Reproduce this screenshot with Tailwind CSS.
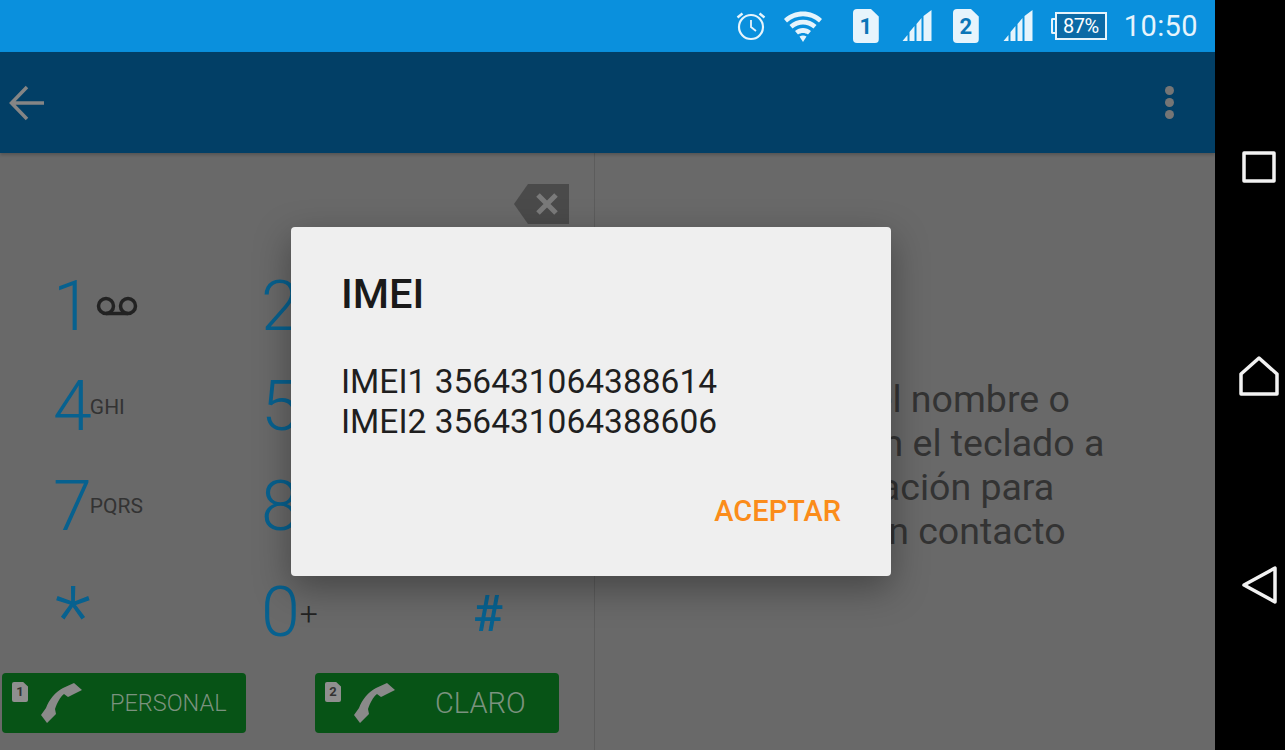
<!DOCTYPE html>
<html lang="en">
  <head>
    <meta charset="UTF-8" />
    <title>IMEI</title>
    <script src="https://cdn.jsdelivr.net/npm/@tailwindcss/browser@4"></script>
  </head>
  <body class="bg-black overflow-hidden font-[Roboto,sans-serif]">
    <div class="relative flex w-[1285px] h-[750px] overflow-hidden">
      <!-- screen -->
      <div class="w-[1215px] h-full flex flex-col bg-[#696969]">
        <!-- status bar -->
        <div class="h-[52px] bg-[#0a90dd] flex items-center justify-end text-[#e6f4fc]">
          <svg width="32" height="32" viewBox="0 0 32 32" fill="none" stroke="#e6f4fc" stroke-width="2.2">
            <circle cx="16" cy="17" r="12" />
            <path d="M16 10v7l5 4" stroke-width="1.8" />
            <path d="M2.5 7.5l5-4M29.5 7.5l-5-4" stroke-width="2.4" />
          </svg>
          <svg class="ml-[16px]" width="40" height="34" viewBox="0 0 38 34" fill="#e6f4fc">
            <path d="M0 10C10 0 28 0 38 10l-3 3.500C26 5 12 5 3 13.500z" />
            <path d="M5.500 16C13 9 25 9 32.500 16l-3 3.500C23 14 15 14 8.500 19.500z" />
            <path d="M11 22C15.500 18 22.500 18 27 22l-3 3.500C21 23.500 17 23.500 14 25.500z" />
            <path d="M15.500 27.500c2-1.500 5-1.500 7 0L19 33z" />
          </svg>
          <div class="ml-[30px] w-[26px] h-[34px] bg-[#e6f4fc] rounded-[4px] [clip-path:polygon(0_0,70%_0,100%_22%,100%_100%,0_100%)] flex items-center justify-center text-[#0b76b8] font-bold text-[22px]">1</div>
          <svg class="ml-[23px]" width="31" height="32" viewBox="0 0 30 32" fill="#e6f4fc">
            <path d="M0 31l5-6v6zM7 31v-9l5-6v15zM14 31V14l5-6v23zM21 31V6l8-6v31z" />
          </svg>
          <div class="ml-[20px] w-[26px] h-[34px] bg-[#e6f4fc] rounded-[4px] [clip-path:polygon(0_0,70%_0,100%_22%,100%_100%,0_100%)] flex items-center justify-center text-[#0b76b8] font-bold text-[22px]">2</div>
          <svg class="ml-[24px]" width="31" height="32" viewBox="0 0 30 32" fill="#e6f4fc">
            <path d="M0 31l5-6v6zM7 31v-9l5-6v15zM14 31V14l5-6v23zM21 31V6l8-6v31z" />
          </svg>
          <div class="ml-[17px] flex items-center">
            <span class="w-[4px] h-[16px] border-2 border-r-0 border-[#e6f4fc] rounded-l-[2px]"></span>
            <div class="w-[52px] h-[28px] border-2 border-[#e6f4fc] bg-[#0b6aa6] flex items-center justify-center text-[20px] tracking-tight text-white">87%</div>
          </div>
          <div class="ml-[17px] mr-[17px] text-[29px] leading-none tracking-[0.4px]">10:50</div>
        </div>
        <!-- action bar -->
        <div class="relative z-10 h-[101px] bg-[#023f66] shadow-[0_2px_3px_rgba(0,0,0,0.2)] flex items-center justify-between pl-[9px] pr-[41px]">
          <svg width="36" height="36" viewBox="0 0 36 36" fill="none" stroke="#858585" stroke-width="3.500">
            <path d="M35 18H3M18 2L2.500 18 18 34" />
          </svg>
          <div class="flex flex-col gap-[3px]">
            <span class="w-[9px] h-[9px] rounded-full bg-[#757575]"></span>
            <span class="w-[9px] h-[9px] rounded-full bg-[#757575]"></span>
            <span class="w-[9px] h-[9px] rounded-full bg-[#757575]"></span>
          </div>
        </div>
        <!-- content -->
        <div class="flex-1 flex">
          <div class="w-[595px] border-r border-[#5c5c5c] flex flex-col">
            <div class="h-[103px] flex justify-end items-start pt-[31px] pr-[25px]">
              <svg width="55" height="40" viewBox="0 0 55 40">
                <path d="M14 0H55V40H14L0 20z" fill="#4a4a4a" />
                <path d="M24 11l18 18M42 11L24 29" stroke="#7a7a7a" stroke-width="5" fill="none" />
              </svg>
            </div>
            <div class="grid grid-cols-[209px_212px_1fr] grid-rows-[100px_100px_100px_105px] text-[#07618f]">
              <div class="flex items-center pl-[53px]"><span class="text-[70px] font-light leading-none">1</span>
                <svg class="ml-[4px]" width="42" height="20" viewBox="0 0 42 20" fill="none" stroke="#222" stroke-width="3.500"><circle cx="10" cy="10" r="7.500" /><circle cx="32" cy="10" r="7.500" /><path d="M10 17.500h22" /></svg>
              </div>
              <div class="flex items-center pl-[52px]"><span class="text-[70px] font-light leading-none">2</span></div>
              <div></div>
              <div class="flex items-center pl-[53px]"><span class="text-[70px] font-light leading-none">4</span><span class="text-[21px] -ml-[2px] translate-y-[2px] text-[#333]">GHI</span></div>
              <div class="flex items-center pl-[52px]"><span class="text-[70px] font-light leading-none">5</span></div>
              <div></div>
              <div class="flex items-center pl-[53px]"><span class="text-[70px] font-light leading-none">7</span><span class="text-[21px] -ml-[2px] translate-y-[1px] text-[#333]">PQRS</span></div>
              <div class="flex items-center pl-[52px]"><span class="text-[70px] font-light leading-none">8</span></div>
              <div></div>
              <div class="flex items-center pl-[55px]"><span class="text-[84px] font-light leading-none h-[70px] translate-y-[1px]">*</span></div>
              <div class="flex items-center pl-[52px] translate-y-[3px]"><span class="text-[70px] font-light leading-none">0</span><span class="text-[32px] font-light text-[#222] translate-y-[2px]">+</span></div>
              <div class="flex items-center pl-[52px] translate-y-[5px]"><span class="text-[50px] font-medium leading-none">#</span></div>
            </div>
            <div class="flex pl-[2px] gap-[69px] mt-[12px]">
              <div class="w-[244px] h-[60px] bg-[#075316] rounded-[4px] flex items-center text-[#7b927f] text-[23.500px] font-light">
                <div class="w-[108px] flex pl-[10px]">
                  <div class="w-[16px] h-[20px] mt-[1px] bg-[#8f8f8f] rounded-[2px] [clip-path:polygon(0_0,70%_0,100%_22%,100%_100%,0_100%)] text-[#333] text-[13px] font-bold text-center leading-[20px]">1</div>
                  <svg class="ml-[12px] mt-[2px]" width="42" height="42" viewBox="0 0 42 42" fill="#8a8a8a"><path d="M34 0L42 7 28 14 24 11C20 14 17 20 15 26L16 31 7 40 1 32 6 25C9 17 15 9 23 5z" /></svg>
                </div>
                <span class="translate-y-[1px]">PERSONAL</span>
              </div>
              <div class="w-[244px] h-[60px] bg-[#075316] rounded-[4px] flex items-center text-[#7b927f] text-[29px] font-light">
                <div class="w-[120px] flex pl-[10px]">
                  <div class="w-[16px] h-[20px] mt-[1px] bg-[#8f8f8f] rounded-[2px] [clip-path:polygon(0_0,70%_0,100%_22%,100%_100%,0_100%)] text-[#333] text-[13px] font-bold text-center leading-[20px]">2</div>
                  <svg class="ml-[12px] mt-[2px]" width="42" height="42" viewBox="0 0 42 42" fill="#8a8a8a"><path d="M34 0L42 7 28 14 24 11C20 14 17 20 15 26L16 31 7 40 1 32 6 25C9 17 15 9 23 5z" /></svg>
                </div>
                <span class="translate-y-[1px]">CLARO</span>
              </div>
            </div>
          </div>
          <div class="flex-1 pt-[224px] text-center text-[37.500px] leading-[44px] text-[#333]">
            <p>Escribe el nombre o</p>
            <p class="pl-[10px]">teléfono en el teclado a</p>
            <p class="pl-[6px]">la aplicación para</p>
            <p>buscar un contacto</p>
          </div>
        </div>
      </div>
      <!-- nav bar -->
      <div class="flex-1 flex flex-col items-center pl-[18px]">
        <svg class="mt-[151px]" width="34" height="32" viewBox="0 0 34 32" fill="none" stroke="#f2f2f2" stroke-width="3.500" stroke-linejoin="round"><rect x="2" y="2" width="30" height="28" /></svg>
        <svg class="mt-[173px]" width="40" height="40" viewBox="0 0 40 40" fill="none" stroke="#f2f2f2" stroke-width="3.500" stroke-linejoin="round"><path d="M2 18L20 2l18 16v20H2z" /></svg>
        <svg class="mt-[170px]" width="36" height="38" viewBox="0 0 36 38" fill="none" stroke="#f2f2f2" stroke-width="3.500" stroke-linejoin="round"><path d="M3 19L34 2v34z" /></svg>
      </div>
      <!-- dialog -->
      <div class="absolute left-[291px] top-[227px] w-[600px] h-[349px] bg-[#efefef] rounded-[4px] shadow-[0_12px_36px_rgba(0,0,0,0.35)] flex flex-col pl-[50px] pr-[50px]">
        <div class="mt-[42px] text-[41.500px] leading-[50px] font-medium text-[#1a1a1a]">IMEI</div>
        <div class="mt-[43px] text-[33.500px] leading-[40px] text-[#1f1f1f]">
          <p>IMEI1 356431064388614</p>
          <p>IMEI2 356431064388606</p>
        </div>
        <div class="mt-[52px] text-right text-[29px] leading-[34px] font-medium text-[#fb8c1a]">ACEPTAR</div>
      </div>
    </div>
  </body>
</html>
